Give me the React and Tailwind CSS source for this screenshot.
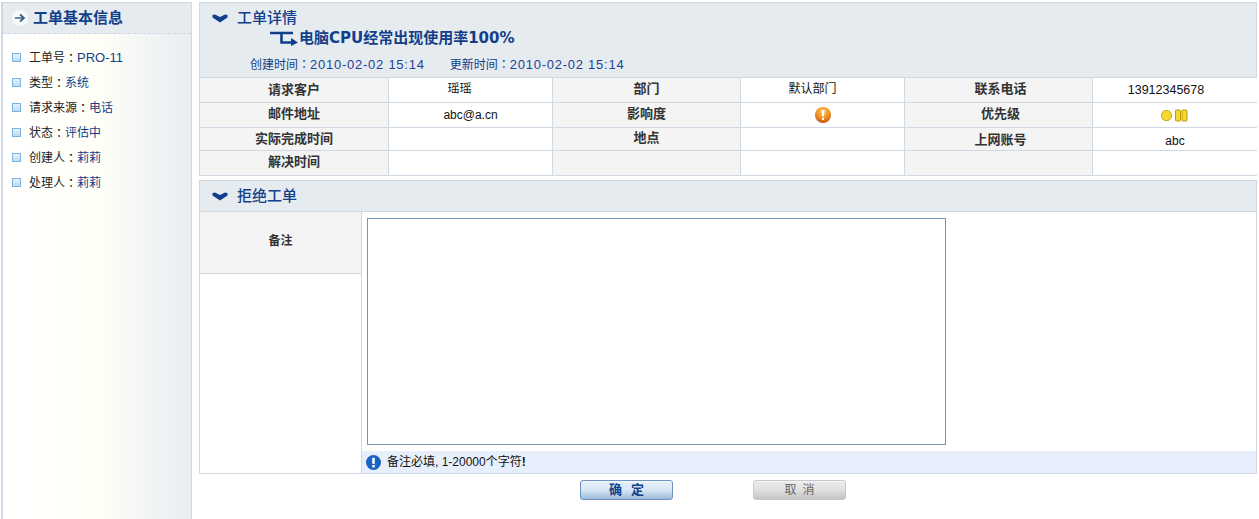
const infoRows = [
  ["工单号", "PRO-11", "text-[13px]"],
  ["类型", "系统", ""],
  ["请求来源", "电话", ""],
  ["状态", "评估中", ""],
  ["创建人", "莉莉", ""],
  ["处理人", "莉莉", ""],
];

// the reference's fullwidth colon sits centred in its cell, as the TC face draws it
const Colon = () => <span className="font-['Noto_Sans_CJK_TC',sans-serif]">：</span>;

const Label = ({ children, h, last, cls = "pb-[2px]" }) => (
  <div
    className={`${h} ${cls} flex items-center justify-center bg-[#f4f4f4] font-bold text-[13px] text-[#333] border-[#cfd8e3] border-r ${last ? "" : "border-b"}`}
  >
    {children}
  </div>
);

const Value = ({ children, h, last, end, cls = "" }) => (
  <div
    className={`${h} ${cls} flex items-center justify-center bg-white text-[#111] border-[#cfd8e3] ${end ? "" : "border-r"} ${last ? "" : "border-b"}`}
  >
    {children}
  </div>
);

const SectionChevron = () => (
  <svg width="16" height="9" viewBox="0 0 16 9" className="shrink-0">
    <path d="M0.5 1 L3 0.5 L8 3 L13 0.5 L15.5 1 L15.5 3.5 L8 8.5 L0.5 3.5 Z" fill="#123f8a" />
  </svg>
);

const App = () => {
  return (
    <div className="h-[519px] w-[1259px] overflow-hidden bg-white flex gap-[7px] pl-[1px] pt-[2px] text-[12px] font-['Liberation_Sans','Noto_Sans_CJK_SC',sans-serif]">
      {/* Left info panel */}
      <div className="w-[191px] h-[530px] shrink-0 border border-l-2 border-[#cfd8e3] bg-gradient-to-r from-white via-[#fffff8] to-[#e9edf1]">
        <div className="h-[31px] flex items-center pl-[9px] gap-[5px] bg-[#e6ebf0] border-b border-dashed border-[#cfd8e3]">
          <svg width="16" height="16" viewBox="0 0 16 16" className="shrink-0">
            <circle cx="8" cy="8" r="8" fill="#f7f8fa" />
            <path d="M3 8 H11 M8 4.5 L12 8 L8 11.5" fill="none" stroke="#3d5f8c" strokeWidth="1.7" />
          </svg>
          <span className="text-[15px] font-bold text-[#123f8a]">工单基本信息</span>
        </div>
        <div className="pt-[11px] pl-[9px]">
          {infoRows.map(([k, v, size]) => (
            <div key={k} className="h-[25px] flex items-center">
              <span className="w-[9px] h-[9px] mr-[8px] border border-[#79b4e3] bg-gradient-to-b from-[#e8f2fb] to-[#bddbf3]" />
              <span className="text-[#222]">{k}</span>
              <Colon />
              <span className={`${size} text-[#123f8a]`}>{v}</span>
            </div>
          ))}
        </div>
      </div>

      {/* Main */}
      <div className="w-[1058px] shrink-0">
        <div className="border border-[#cfd8e3]">
          <div className="h-[75px] bg-[#e6ebf0] border-b border-[#cfd8e3]">
            <div className="flex items-center h-[30px] pl-[12px] gap-[9px]">
              <SectionChevron />
              <span className="text-[15px] text-[#123f8a] font-medium">工单详情</span>
            </div>
            <div className="flex items-center pl-[70px] -mt-[4px] h-[18px]">
              <svg width="29" height="15" viewBox="0 0 29 15" className="shrink-0">
                <path d="M0 2 H23 M11.5 1 V11.5 H22" fill="none" stroke="#123f8a" strokeWidth="2.6" />
                <path d="M21 7 L28 11.5 L21 15 Z" fill="#123f8a" />
              </svg>
              <span className="text-[15px] font-bold text-[#123f8a] font-['DejaVu_Sans','Noto_Sans_CJK_SC',sans-serif]">
                电脑CPU经常出现使用率100%
              </span>
            </div>
            <div className="flex items-center pl-[50px] mt-[8px] text-[#123f8a] gap-[25px]">
              <span>
                创建时间<Colon />
                <span className="text-[13px] tracking-[0.75px] text-[#1f3f95]">2010-02-02 15:14</span>
              </span>
              <span>
                更新时间<Colon />
                <span className="text-[13px] tracking-[0.75px] text-[#1f3f95]">2010-02-02 15:14</span>
              </span>
            </div>
          </div>
          <div className="grid grid-cols-[189px_164px_188px_164px_188px_164px]">
            <Label h="h-[25px]" cls="">请求客户</Label>
            <Value h="h-[25px]" cls="pr-[22px] pb-[2px]">瑶瑶</Value>
            <Label h="h-[25px]">部门</Label>
            <Value h="h-[25px]" cls="pr-[20px] pb-[2px]">默认部门</Value>
            <Label h="h-[25px]" cls="pl-[4px] pb-[2px]">联系电话</Label>
            <Value h="h-[25px]" end cls="pr-[18px] pt-[1px] text-[12.5px]">13912345678</Value>

            <Label h="h-[25px]" cls="pb-[2px]">邮件地址</Label>
            <Value h="h-[25px]">abc@a.cn</Value>
            <Label h="h-[25px]" cls="pb-[2px]">影响度</Label>
            <Value h="h-[25px]">
              <svg width="16" height="16" viewBox="0 0 16 16">
                <defs>
                  <radialGradient id="impact" cx="50%" cy="30%" r="75%">
                    <stop offset="0%" stopColor="#ffc860" />
                    <stop offset="60%" stopColor="#ec8a20" />
                    <stop offset="100%" stopColor="#b4460c" />
                  </radialGradient>
                </defs>
                <circle cx="8" cy="8" r="8" fill="url(#impact)" />
                <path d="M6.4 3 H9.6 L8.8 9.5 H7.2 Z" fill="#fff" />
                <rect x="7" y="10.8" width="2" height="2.2" fill="#fff" />
              </svg>
            </Value>
            <Label h="h-[25px]" cls="pl-[4px] pb-[2px]">优先级</Label>
            <Value h="h-[25px]" end cls="pr-[2px]">
              <svg width="27" height="13" viewBox="0 0 27 13">
                <circle cx="5.5" cy="6.5" r="5.2" fill="#f5d92e" stroke="#b89a10" strokeWidth="0.8" />
                <rect x="14.5" y="1" width="5" height="11" rx="1" fill="#f5d92e" stroke="#b89a10" />
                <rect x="21" y="1" width="5" height="11" rx="1" fill="#f5d92e" stroke="#b89a10" />
              </svg>
            </Value>

            <Label h="h-[23px]" cls="">实际完成时间</Label>
            <Value h="h-[23px]" />
            <Label h="h-[23px]" cls="pb-[2px]">地点</Label>
            <Value h="h-[23px]" />
            <Label h="h-[23px]" cls="pl-[4px] pt-[2px]">上网账号</Label>
            <Value h="h-[23px]" end cls="pt-[3px]">abc</Value>

            <Label h="h-[24px]" last cls="pb-[2px]">解决时间</Label>
            <Value h="h-[24px]" last />
            <Label h="h-[24px]" last />
            <Value h="h-[24px]" last />
            <Label h="h-[24px]" last />
            <Value h="h-[24px]" last end />
          </div>
        </div>

        <div className="border border-[#cfd8e3] mt-[4px]">
          <div className="h-[31px] flex items-center pl-[12px] gap-[9px] bg-[#e6ebf0] border-b border-[#cfd8e3]">
            <SectionChevron />
            <span className="text-[15px] text-[#123f8a] font-medium">拒绝工单</span>
          </div>
          <div className="flex h-[261px]">
            <div className="w-[162px] shrink-0 border-r border-[#cfd8e3]">
              <div className="h-[62px] flex items-center justify-center bg-[#f4f4f4] font-bold text-[#333] border-b border-[#cfd8e3] pb-[4px]">
                备注
              </div>
            </div>
            <div className="flex-1 flex flex-col">
              <div className="flex-1 pl-[5px] pt-[6px]">
                <textarea className="block w-[579px] h-[227px] border border-[#7396b8] bg-white resize-none outline-none" />
              </div>
              <div className="h-[22px] flex items-center bg-[#e8effc] pl-[4px] gap-[6px] text-[#111]">
                <svg width="15" height="15" viewBox="0 0 15 15" className="shrink-0">
                  <circle cx="7.5" cy="7.5" r="7.5" fill="#1a62c4" />
                  <rect x="6.2" y="2.8" width="2.6" height="6" fill="#fff" />
                  <rect x="6.2" y="10" width="2.6" height="2.4" fill="#fff" />
                </svg>
                <span>
                  备注必填, 1-20000个字符<span className="font-bold">!</span>
                </span>
              </div>
            </div>
          </div>
        </div>

        <div className="flex mt-[6px] pl-[381px] gap-[80px]">
          <button className="w-[93px] h-[20px] rounded-[3px] border border-[#6d93bd] shadow-[inset_0_1px_0_#ffffff80] bg-gradient-to-b from-[#e8f1fa] via-[#d8e7f5] to-[#9dbcdc] text-[#123f8a] text-[13px] font-bold tracking-[9px] pl-[9px] flex items-center justify-center">
            确定
          </button>
          <button className="w-[93px] h-[20px] rounded-[3px] border border-[#c8c8c8] shadow-[inset_0_1px_0_#ffffff80] bg-gradient-to-b from-[#ececec] via-[#e0e0e0] to-[#c4c4c4] text-[#666] tracking-[6px] pl-[6px] flex items-center justify-center">
            取消
          </button>
        </div>
      </div>
    </div>
  );
};

export default App;
